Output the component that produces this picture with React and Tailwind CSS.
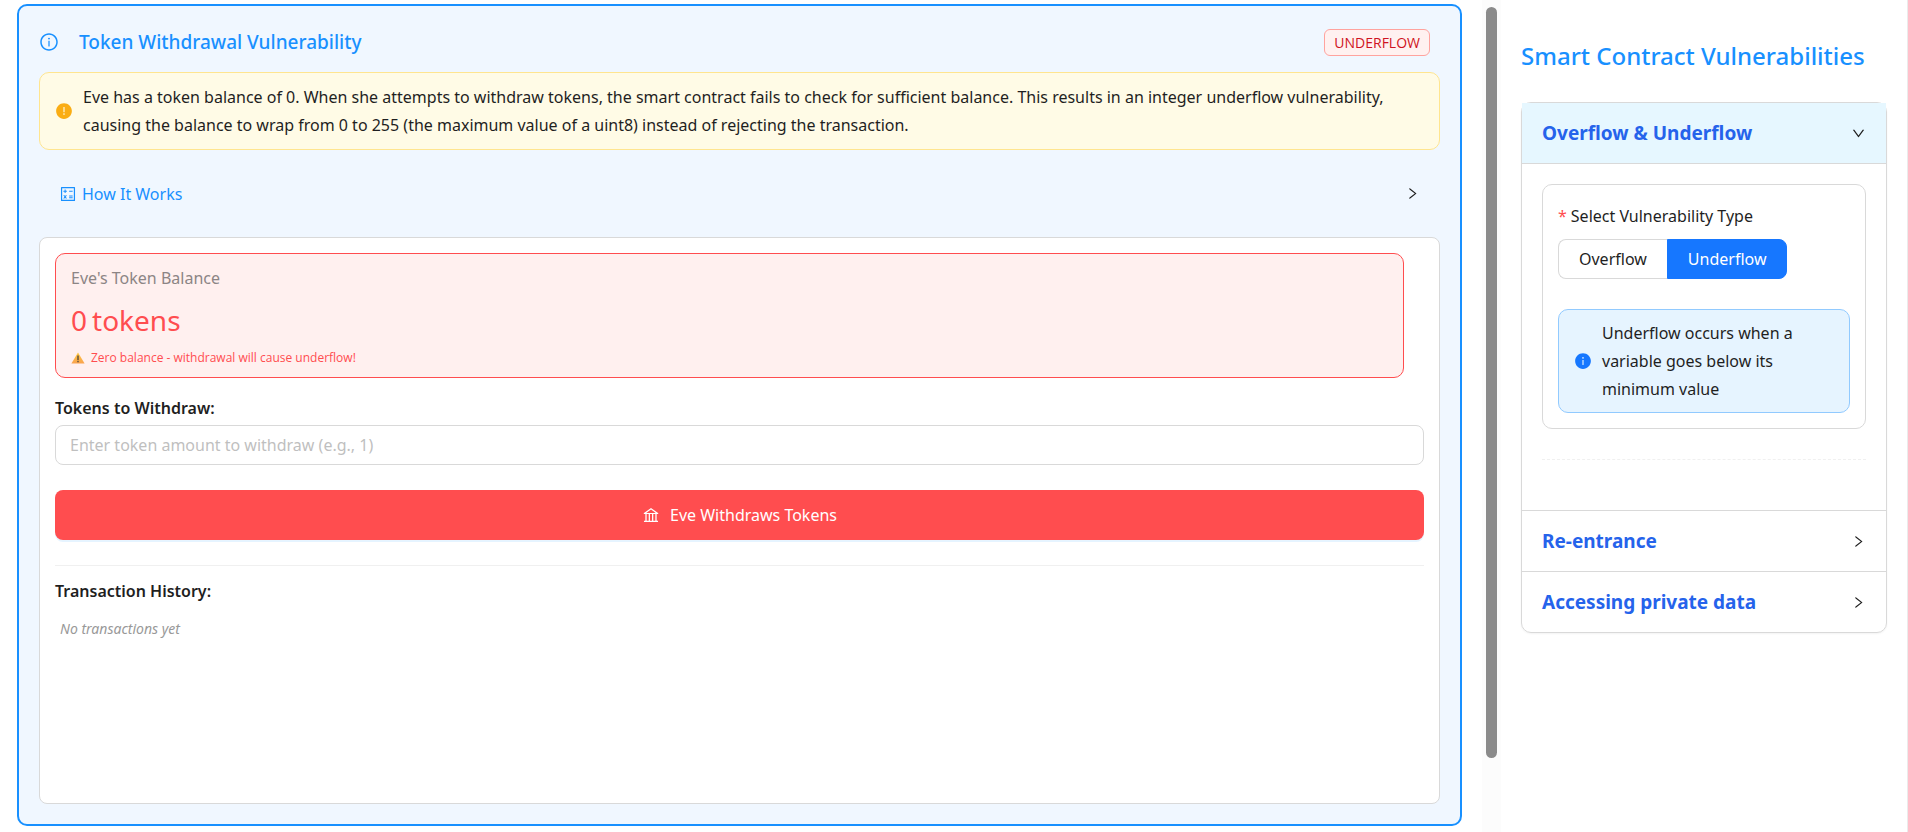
import { useState } from 'react'
import {
  AiFillExclamationCircle,
  AiFillInfoCircle,
  AiOutlineBank,
  AiOutlineCalculator,
  AiOutlineDown,
  AiOutlineInfoCircle,
  AiOutlineRight,
} from 'react-icons/ai'

const TYPES = [
  { id: 'overflow', label: 'Overflow' },
  { id: 'underflow', label: 'Underflow' },
]

function WarningIcon() {
  return (
    <svg viewBox="0 0 14 12" className="h-3 w-[14px] shrink-0" aria-hidden="true">
      <defs>
        <linearGradient id="warn" x1="0" y1="0" x2="0" y2="1">
          <stop offset="0" stopColor="#ffc83d" />
          <stop offset="1" stopColor="#f9a24f" />
        </linearGradient>
      </defs>
      <path d="M7 .4 13.6 11.6H.4Z" fill="url(#warn)" />
      <path d="M6.4 3.6h1.2v4.6H6.4ZM6.4 9h1.2v1.3H6.4Z" fill="#3b3a39" />
    </svg>
  )
}

function BalanceCard() {
  return (
    <div className="mr-5 rounded-[10px] border border-[#ff4d4f] bg-[#fff0ef] px-[15px] py-2.5">
      <div className="text-base leading-7 text-[#8c8585]">Eve's Token Balance</div>
      <div className="mt-2 flex items-baseline gap-[5px] text-[28px] leading-10 text-[#ff4d4f]">
        <span>0</span>
        <span>tokens</span>
      </div>
      <div className="mt-2 flex items-center gap-1.5 text-xs leading-[19px] text-[#ff4d4f]">
        <WarningIcon />
        <span className="font-['Open_Sans',sans-serif]">
          Zero balance - withdrawal will cause underflow!
        </span>
      </div>
    </div>
  )
}

function WithdrawPanel() {
  const [amount, setAmount] = useState('')

  return (
    <div className="flex grow flex-col rounded-lg border border-[#d9d9d9] bg-white p-[15px]">
      <BalanceCard />
      <label htmlFor="amount" className="mt-4 text-base leading-7 font-semibold">
        Tokens to Withdraw:
      </label>
      <input
        id="amount"
        value={amount}
        onChange={(e) => setAmount(e.target.value)}
        placeholder="Enter token amount to withdraw (e.g., 1)"
        className="mt-[3px] h-10 rounded-lg border border-[#d9d9d9] px-3.5 text-base outline-none placeholder:text-[#bfbfbf]"
      />
      <button
        type="button"
        className="mt-[25px] flex h-[50px] items-center justify-center gap-2.5 rounded-lg bg-[#ff4d4f] text-base text-white shadow-[0_2px_0_#e6f4ff]"
      >
        <AiOutlineBank className="size-[18px]" />
        Eve Withdraws Tokens
      </button>
      <div className="mt-[25px] border-t border-[#f0f0f0] pt-[11px]">
        <h3 className="text-base leading-7 font-semibold">Transaction History:</h3>
        <p className="mt-3 px-[5px] text-sm leading-6 text-[#999] italic">No transactions yet</p>
      </div>
    </div>
  )
}

function TypePicker() {
  const [type, setType] = useState('underflow')

  return (
    <div className="rounded-[10px] border border-[#d9d9d9] p-[15px]">
      <fieldset>
        <legend className="pt-0.5 text-base leading-7">
          <span className="mr-1 text-[#ff4d4f]">*</span>Select Vulnerability Type
        </legend>
        <div className="relative mt-[9px] flex">
          {TYPES.map((t) => (
            <label
              key={t.id}
              className="flex h-10 cursor-pointer items-center border border-[#d9d9d9] px-5 text-base first:rounded-l-lg first:border-r-0 last:rounded-r-lg has-checked:border-[#1677ff] has-checked:bg-[#1677ff] has-checked:text-white"
            >
              <input
                type="radio"
                name="type"
                value={t.id}
                checked={type === t.id}
                onChange={() => setType(t.id)}
                className="sr-only"
              />
              {t.label}
            </label>
          ))}
        </div>
      </fieldset>
      <div className="mt-[30px] flex items-center gap-2.5 rounded-[10px] border border-[#91caff] bg-[#e6f4ff] px-[15px] py-[9px]">
        <AiFillInfoCircle className="size-[18px] shrink-0 text-[#1677ff]" />
        <p className="text-base leading-7">
          Underflow occurs when a variable goes below its minimum value
        </p>
      </div>
    </div>
  )
}

function SectionHeader({ title, open }) {
  const Arrow = open ? AiOutlineDown : AiOutlineRight
  return (
    <button
      type="button"
      aria-expanded={Boolean(open)}
      className={
        open
          ? 'flex h-[60px] w-full items-center justify-between bg-[#e6f7ff] px-5'
          : 'flex h-[60px] w-full items-center justify-between px-5'
      }
    >
      <span className="text-[19px] font-bold text-[#2563eb]">{title}</span>
      <Arrow className="size-[15px]" />
    </button>
  )
}

export default function App() {
  return (
    <div className="flex min-h-screen bg-white font-['Noto_Sans','Open_Sans',sans-serif] text-[#1f1f1f]">
      <main className="flex min-w-0 grow flex-col pt-1 pr-5 pb-1.5 pl-[17px]">
        <section className="flex grow flex-col rounded-[10px] border-2 border-[#1890ff] bg-[#f0f7ff] p-5">
          <header className="flex items-center text-[#1890ff]">
            <AiOutlineInfoCircle className="size-5" />
            <h2 className="ml-5 text-[19px] leading-8 font-medium">Token Withdrawal Vulnerability</h2>
            <span className="mr-2.5 ml-auto rounded-md border border-[#ffa39e] bg-[#fff1f0] px-[9px] font-['Open_Sans',sans-serif] text-sm leading-[25px] text-[#cf1322]">
              UNDERFLOW
            </span>
          </header>

          <div className="mt-3.5 flex items-center gap-2.5 rounded-[10px] border border-[#ffe58f] bg-[#fffbe6] px-[15px] py-2.5">
            <AiFillExclamationCircle className="size-[18px] shrink-0 text-[#faad14]" />
            <p className="text-base leading-7">
              Eve has a token balance of 0. When she attempts to withdraw tokens, the smart contract
              fails to check for sufficient balance. This results in an integer underflow
              vulnerability, causing the balance to wrap from 0 to 255 (the maximum value of a uint8)
              instead of rejecting the transaction.
            </p>
          </div>

          <button type="button" className="my-[15px] flex h-[57px] items-center gap-[5px] px-5">
            <AiOutlineCalculator className="size-[18px] text-[#1890ff]" />
            <span className="text-base text-[#1890ff]">How It Works</span>
            <AiOutlineRight className="ml-auto size-[15px]" />
          </button>

          <WithdrawPanel />
        </section>
      </main>

      <div className="flex w-[19px] shrink-0 flex-col items-center bg-[#fcfcfc] pt-[7px]" aria-hidden="true">
        <div className="h-[91%] w-[11px] rounded-full bg-[#8b8b8b]" />
      </div>

      <aside className="w-[407px] shrink-0 border-r border-[#ebebeb] px-5">
        <h1 className="mt-9 text-2xl leading-10 font-medium text-[#1890ff]">
          Smart Contract Vulnerabilities
        </h1>
        <div className="mt-[26px] rounded-[10px] border border-[#d9d9d9] shadow-[0_1px_2px_rgba(0,0,0,0.05)]">
          <SectionHeader title="Overflow & Underflow" open />
          <div className="border-y border-[#d9d9d9] px-5 pt-5 pb-[50px]">
            <TypePicker />
            <hr className="mt-[30px] border-dashed border-[#f0f0f0]" />
          </div>
          <SectionHeader title="Re-entrance" />
          <div className="border-t border-[#d9d9d9]">
            <SectionHeader title="Accessing private data" />
          </div>
        </div>
      </aside>
    </div>
  )
}
